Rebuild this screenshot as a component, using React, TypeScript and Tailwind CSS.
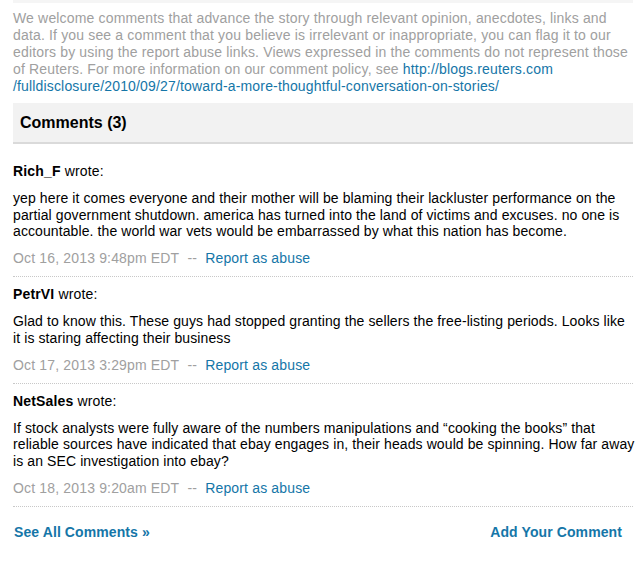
import React from 'react';

interface Comment {
  author: string;
  body: string;
  date: string;
}

// line breaks follow the original page's wrapping
const comments: Comment[] = [
  {
    author: 'Rich_F',
    body: 'yep here it comes everyone and their mother will be blaming their lackluster performance on the\npartial government shutdown. america has turned into the land of victims and excuses. no one is\naccountable. the world war vets would be embarrassed by what this nation has become.',
    date: 'Oct 16, 2013 9:48pm EDT',
  },
  {
    author: 'PetrVI',
    body: 'Glad to know this. These guys had stopped granting the sellers the free-listing periods. Looks like\nit is staring affecting their business',
    date: 'Oct 17, 2013 3:29pm EDT',
  },
  {
    author: 'NetSales',
    body: 'If stock analysts were fully aware of the numbers manipulations and \u201ccooking the books\u201d that\nreliable sources have indicated that ebay engages in, their heads would be spinning. How far away\nis an SEC investigation into ebay?',
    date: 'Oct 18, 2013 9:20am EDT',
  },
];

const CommentItem: React.FC<{ comment: Comment }> = ({ comment }) => (
  <div className="pt-[9px] pb-[9px] border-b border-dotted border-[#c8c8c8]">
    <div className="leading-[17px] text-black">
      <span className="font-bold">{comment.author}</span> wrote:
    </div>
    <p className="mt-[10px] w-[627px] whitespace-pre-line leading-[16.7px] text-black tracking-[0.1px]">{comment.body}</p>
    <div className="mt-[10px] leading-[17px] text-[#a0a0a0]">
      {comment.date}&nbsp;&nbsp;--&nbsp;&nbsp;
      <a href="#" className="text-[#1576a8]">Report as abuse</a>
    </div>
  </div>
);

export default function App() {
  return (
    <div className="w-[640px] h-[567px] bg-white overflow-hidden font-['Liberation_Sans',Arial,sans-serif] text-[14px] tracking-[0.16px]">
      <div className="ml-[13px] w-[620px]">
        <div className="h-[3px] bg-[#f5f5f5]" />

        {/* Comment policy */}
        <p className="mt-[7px] leading-[17px] text-[#a0a0a0]">
          We welcome comments that advance the story through relevant opinion, anecdotes, links and data. If you see a comment that you believe is irrelevant or inappropriate, you can flag it to our editors by using the report abuse links. Views expressed in the comments do not represent those of Reuters. For more information on our comment policy, see{' '}
          <a href="#" className="text-[#1576a8]">http://blogs.reuters.com</a>
          <br />
          <a href="#" className="text-[#1576a8]">/fulldisclosure/2010/09/27/toward-a-more-thoughtful-conversation-on-stories/</a>
        </p>

        {/* Header */}
        <div className="mt-[8px] h-[41px] bg-[#f2f2f2] border-b-2 border-[#dadada] flex items-center pl-[7px]">
          <h2 className="text-[16px] font-bold text-black tracking-normal">Comments (3)</h2>
        </div>

        <div className="mt-[10px]">
          {comments.map((c) => (
            <CommentItem key={c.author} comment={c} />
          ))}
        </div>

        {/* Footer */}
        <div className="mt-[17px] flex items-center justify-between pl-[1px] pr-[11px] leading-[17px] font-bold text-[#1576a8] tracking-[0.1px]">
          <a href="#">See All Comments &raquo;</a>
          <a href="#">Add Your Comment</a>
        </div>
      </div>
    </div>
  );
}
